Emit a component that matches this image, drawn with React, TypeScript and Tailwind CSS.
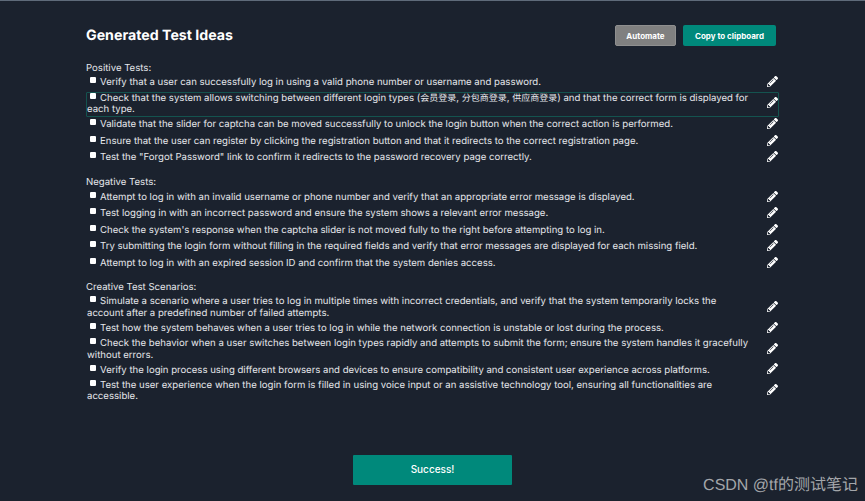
import type { ReactNode } from "react";
import { FaPencilAlt } from "react-icons/fa";

const sections: { title: string; items: ReactNode[] }[] = [
  {
    title: "Positive Tests:",
    items: [
      "Verify that a user can successfully log in using a valid phone number or username and password.",
      <>
        Check that the system allows switching between different login types (
        <span className="text-[9px] leading-[9px]">会员登录</span>, <span className="text-[9px] leading-[9px]">分包商登录</span>,{" "}
        <span className="text-[9px] leading-[9px]">供应商登录</span>) and that the correct form is displayed for{" "}
        <span>each type.</span>
      </>,
      "Validate that the slider for captcha can be moved successfully to unlock the login button when the correct action is performed.",
      "Ensure that the user can register by clicking the registration button and that it redirects to the correct registration page.",
      'Test the "Forgot Password" link to confirm it redirects to the password recovery page correctly.',
    ],
  },
  {
    title: "Negative Tests:",
    items: [
      "Attempt to log in with an invalid username or phone number and verify that an appropriate error message is displayed.",
      "Test logging in with an incorrect password and ensure the system shows a relevant error message.",
      "Check the system's response when the captcha slider is not moved fully to the right before attempting to log in.",
      "Try submitting the login form without filling in the required fields and verify that error messages are displayed for each missing field.",
      "Attempt to log in with an expired session ID and confirm that the system denies access.",
    ],
  },
  {
    title: "Creative Test Scenarios:",
    items: [
      "Simulate a scenario where a user tries to log in multiple times with incorrect credentials, and verify that the system temporarily locks the account after a predefined number of failed attempts.",
      "Test how the system behaves when a user tries to log in while the network connection is unstable or lost during the process.",
      "Check the behavior when a user switches between login types rapidly and attempts to submit the form; ensure the system handles it gracefully without errors.",
      "Verify the login process using different browsers and devices to ensure compatibility and consistent user experience across platforms.",
      "Test the user experience when the login form is filled in using voice input or an assistive technology tool, ensuring all functionalities are accessible.",
    ],
  },
];

const IdeaRow = ({ text, active }: { text: ReactNode; active?: boolean }) => (
  <div
    className={`flex min-h-[16.5px] items-center justify-between rounded-[1px] border ${
      active ? "border-[#14534f]" : "border-transparent"
    }`}
  >
    <p className="w-[664px] text-[9.6px] leading-[11.7px]">
      <span className="mb-[2px] ml-[3px] mr-[4px] inline-block h-[6px] w-[6px] rounded-[1px] bg-white" />
      {text}
    </p>
    <FaPencilAlt className="mb-[3px] h-[11px] w-[11px] text-white" />
  </div>
);

export default function App() {
  return (
    <div
      className="relative flex h-[501px] w-full flex-col overflow-hidden border-t border-[#5f6b7a] bg-[#1b222e] pl-[86px] pr-[86px] text-[#e5e7eb] [text-rendering:geometricPrecision]"
      style={{ fontFamily: 'Inter, "Noto Sans CJK SC", sans-serif' }}
    >
      {/* Header */}
      <div className="mt-[24px] flex h-[21px] items-center justify-between pr-[3px]">
        <h1 className="text-[14.2px] font-bold text-white">Generated Test Ideas</h1>
        <div className="flex gap-[7px]">
          <button className="h-[21px] w-[61px] rounded-[2px] border border-[#8f8f8f] bg-[#808080] text-[8px] font-bold text-white">
            Automate
          </button>
          <button className="h-[21px] w-[93px] rounded-[2px] bg-[#00897b] text-[8px] font-bold text-white">
            Copy to clipboard
          </button>
        </div>
      </div>

      {/* Test idea sections */}
      <div className="mt-[16.5px] flex flex-col gap-[10.5px]">
        {sections.map((section) => (
          <div key={section.title}>
            <div className="text-[9.6px] leading-[12.5px]">{section.title}</div>
            {section.items.map((item, i) => (
              <IdeaRow
                key={i}
                text={item}
                active={section.title === "Positive Tests:" && i === 1}
              />
            ))}
          </div>
        ))}
      </div>

      <div className="mt-auto mb-[16px] flex justify-center">
        <button className="h-[30px] w-[159px] rounded-[1px] bg-[#00897b] pb-[1px] text-[10px] font-medium text-white">
          Success!
        </button>
      </div>

      {/* CSDN watermark */}
      <div
        className="absolute bottom-[3px] right-[7px] text-[16px] text-[#a3a6aa]"
        style={{ fontFamily: '"Liberation Sans", "Noto Sans CJK SC", sans-serif' }}
      >
        CSDN @tf的测试笔记
      </div>
    </div>
  );
}
